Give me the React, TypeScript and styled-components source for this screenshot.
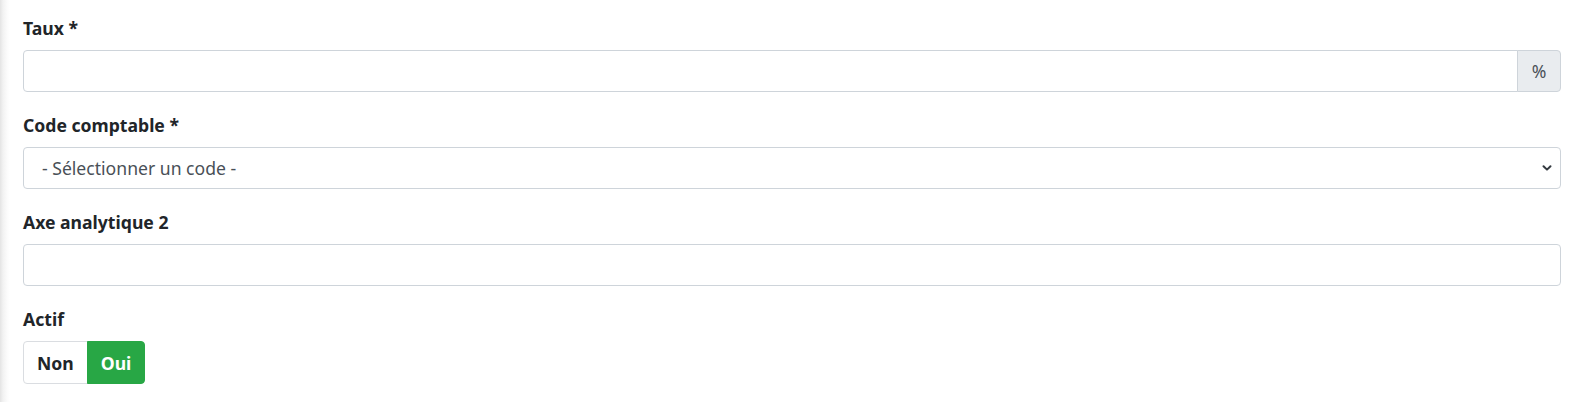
import React, { useState } from 'react'
import styled, { createGlobalStyle, css } from 'styled-components'

const GlobalStyle = createGlobalStyle`
	html, body {
		margin: 0;
		padding: 0;
		background: #fff;
	}
	body {
		font-family: "Noto Sans", "Open Sans", "Liberation Sans", sans-serif;
		color: #212529;
	}
	* {
		box-sizing: border-box;
	}
`

const Page = styled.div`
	min-height: 402px;
	padding: 15px 19px 0 23px;
	background: linear-gradient(to right, #e4e4e4 0px, #f2f2f2 3px, #fbfbfb 7px, #fff 10px);
`

const Group = styled.div`
	margin-bottom: 20px;
`

const Label = styled.label`
	display: block;
	font-size: 17.6px;
	font-weight: 700;
	line-height: 26px;
	margin-bottom: 9px;
	color: #212529;
`

const InputGroup = styled.div`
	display: flex;
	height: 42px;
`

const fieldBase = css`
	height: 42px;
	border: 1px solid #ced4da;
	background-color: #fff;
	font-family: inherit;
	font-size: 17.6px;
	color: #495057;
	outline: none;
`

const Input = styled.input<{ $joined?: boolean }>`
	${fieldBase};
	display: block;
	width: 100%;
	flex: 1;
	padding: 0 13px;
	border-radius: ${({ $joined }) => ($joined ? '4px 0 0 4px' : '4px')};
`

const Addon = styled.span`
	display: flex;
	align-items: center;
	justify-content: center;
	width: 44px;
	margin-left: -1px;
	background: #e9ecef;
	border: 1px solid #ced4da;
	border-radius: 0 4px 4px 0;
	font-size: 17.6px;
	color: #495057;
`

const SelectWrap = styled.div`
	position: relative;
`

const Select = styled.select`
	${fieldBase};
	display: block;
	width: 100%;
	padding: 0 36px 0 18px;
	border-radius: 4px;
	appearance: none;
	-webkit-appearance: none;
`

const Chevron = styled.svg`
	position: absolute;
	right: 9px;
	top: 50%;
	width: 10px;
	height: 8px;
	transform: translateY(-50%);
	pointer-events: none;
`

const Toggle = styled.div`
	display: inline-flex;
	height: 43px;
`

const ToggleButton = styled.button<{ $active: boolean; $side: 'left' | 'right' }>`
	height: 43px;
	padding: 0 13px;
	font-family: inherit;
	font-size: 17.6px;
	font-weight: 700;
	cursor: pointer;
	border: 1px solid ${({ $active }) => ($active ? '#28a745' : '#dadde1')};
	background: ${({ $active }) => ($active ? '#28a745' : '#fff')};
	color: ${({ $active }) => ($active ? '#fff' : '#212529')};
	border-radius: ${({ $side }) => ($side === 'left' ? '4px 0 0 4px' : '0 4px 4px 0')};
	${({ $side }) => $side === 'right' && css`margin-left: -1px;`}
`

export default function App() {
	const [actif, setActif] = useState(true)

	return <>
		<GlobalStyle />
		<Page>
			<Group>
				<Label htmlFor="taux">Taux *</Label>
				<InputGroup>
					<Input id="taux" $joined />
					<Addon>%</Addon>
				</InputGroup>
			</Group>

			<Group>
				<Label htmlFor="code">Code comptable *</Label>
				<SelectWrap>
					<Select id="code" defaultValue="">
						<option value="">- Sélectionner un code -</option>
					</Select>
					<Chevron viewBox="0 0 10 8">
						<path d="M1.5 2.2 L5 5.6 L8.5 2.2" fill="none" stroke="#343a40" strokeWidth="2" strokeLinecap="round" strokeLinejoin="round" />
					</Chevron>
				</SelectWrap>
			</Group>

			<Group>
				<Label htmlFor="axe">Axe analytique 2</Label>
				<Input id="axe" />
			</Group>

			<Group>
				<Label>Actif</Label>
				<Toggle>
					<ToggleButton $side="left" $active={!actif} onClick={() => setActif(false)}>Non</ToggleButton>
					<ToggleButton $side="right" $active={actif} onClick={() => setActif(true)}>Oui</ToggleButton>
				</Toggle>
			</Group>
		</Page>
	</>
}
